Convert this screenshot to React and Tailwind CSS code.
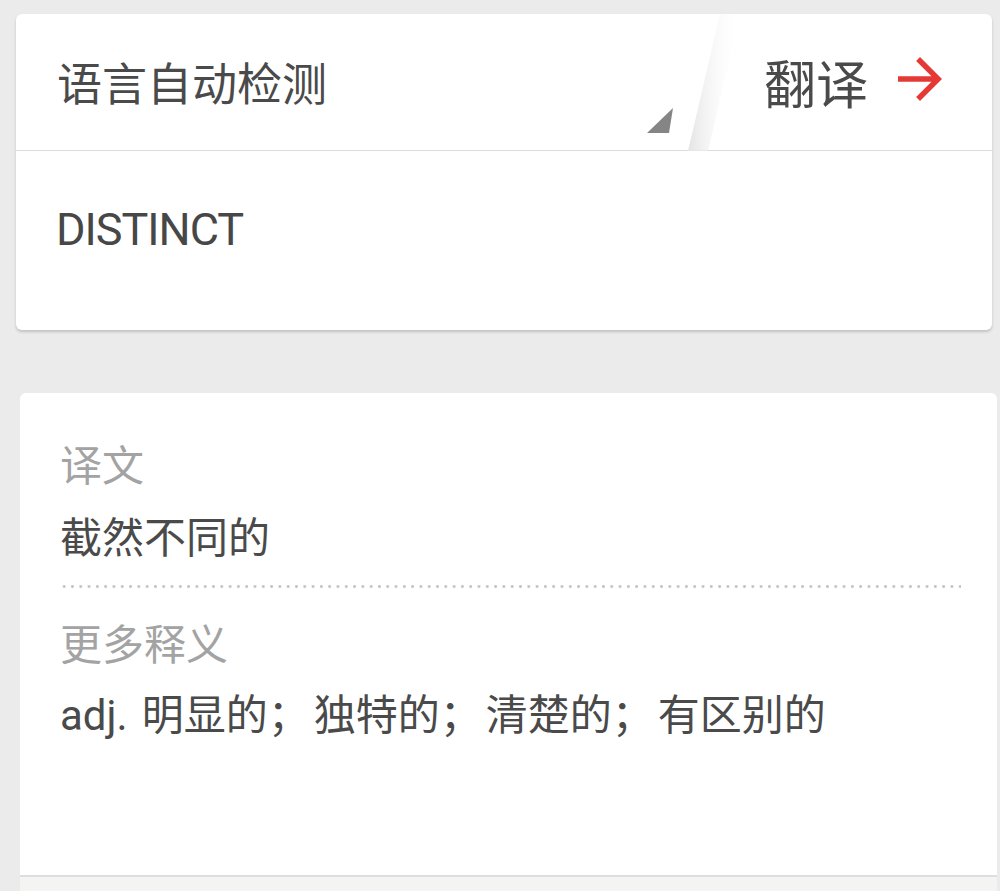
import React from "react";

const font = { fontFamily: '"Noto Sans CJK SC", "Noto Sans", sans-serif' };
const roboto = { fontFamily: 'Roboto, "Noto Sans", sans-serif' };

function Semi() {
  return <span className="pr-[4px]">；</span>;
}

export default function App() {
  return (
    <div
      className="w-[1000px] h-[891px] overflow-hidden bg-[#ebebeb] flex flex-col"
      style={font}
    >
      {/* Card 1 */}
      <div className="mt-[14px] ml-[16px] w-[976px] h-[316px] bg-white rounded-[6px] shadow-[0_2px_3px_rgba(0,0,0,0.18)] flex flex-col">
        <div className="relative h-[137px] flex items-center border-b border-[#dcdcdc]">
          <div className="flex-1 h-full flex items-center pl-[41px] text-[45px] leading-[50px] text-[#4a4a4a]">
            语言自动检测
          </div>
          {/* dropdown triangle */}
          <svg
            className="absolute left-[630px] top-[92px]"
            width="30"
            height="30"
            viewBox="0 0 30 30"
          >
            <polygon points="1,27 27,2 23,27" fill="#858585" />
          </svg>
          {/* slanted separator */}
          <svg
            className="absolute left-[668px] top-0"
            width="60"
            height="137"
            viewBox="0 0 60 137"
          >
            <defs>
              <linearGradient id="sep" x1="0" y1="0" x2="1" y2="0">
                <stop offset="0" stopColor="#e4e4e4" />
                <stop offset="1" stopColor="#ffffff" stopOpacity="0" />
              </linearGradient>
            </defs>
            <polygon points="36,0 56,0 24,137 4,137" fill="url(#sep)" />
          </svg>
          <div className="h-full flex items-center pr-[39px]">
            <span className="text-[52px] leading-[56px] text-[#4a4a4a] mr-[19px]">
              翻译
            </span>
            <svg width="66" height="66" viewBox="0 0 24 24" className="mt-[-6px]">
              <path
                d="M12 4l-1.41 1.41L16.17 11H4v2h12.17l-5.58 5.59L12 20l8-8z"
                fill="#e53935"
              />
            </svg>
          </div>
        </div>
        <div className="flex-1 pl-[40px] pt-[54px]">
          <div
            className="text-[45px] leading-[50px] tracking-[-1px] text-[#474747]"
            style={roboto}
          >
            DISTINCT
          </div>
        </div>
      </div>

      {/* Card 2 */}
      <div className="mt-[63px] ml-[20px] w-[977px] h-[484px] shrink-0 bg-white rounded-t-[6px] border-b-2 border-[#dedede] flex flex-col px-[40px] pt-[45px]">
        <div className="text-[42px] leading-[50px] text-[#a3a3a3]">译文</div>
        <div className="mt-[22px] text-[42px] leading-[50px] text-[#4a4a4a]">
          截然不同的
        </div>
        <div className="mt-[25px] mr-[-4px] h-[3px] bg-[radial-gradient(circle,#c4c4c4_1.2px,transparent_1.7px)] bg-[length:8.3px_3px]" />
        <div className="mt-[29px] text-[42px] leading-[50px] text-[#a3a3a3]">
          更多释义
        </div>
        <div className="mt-[20px] text-[42px] leading-[50px] text-[#4a4a4a] whitespace-nowrap">
          <span style={roboto}>adj.</span>
          <span className="ml-[14px]">
            明显的<Semi />独特的<Semi />清楚的<Semi />有区别的
          </span>
        </div>
      </div>
      <div className="ml-[20px] w-[977px] flex-1 bg-[#f4f4f2]" />
    </div>
  );
}
